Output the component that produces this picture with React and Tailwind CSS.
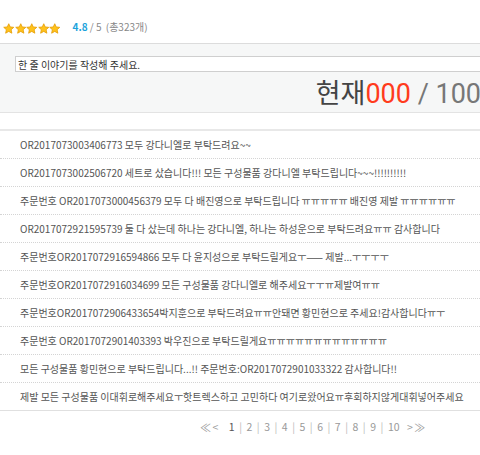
import React from "react";

const rows = [
  "OR2017073003406773 모두 강다니엘로 부탁드려요~~",
  "OR2017073002506720 세트로 샀습니다!!! 모든 구성물품 강다니엘 부탁드립니다~~~!!!!!!!!!!",
  "주문번호 OR2017073000456379 모두 다 배진영으로 부탁드립니다 ㅠㅠㅠㅠㅠ 배진영 제발 ㅠㅠㅠㅠㅠㅠ",
  "OR2017072921595739 둘 다 샀는데 하나는 강다니엘, 하나는 하성운으로 부탁드려요ㅠㅠ 감사합니다",
  "주문번호OR2017072916594866 모두 다 윤지성으로 부탁드릴게요ㅜ—— 제발...ㅜㅜㅜㅜ",
  "주문번호OR2017072916034699 모든 구성물품 강다니엘로 해주세요ㅜㅜㅠ제발여ㅠㅠ",
  "주문번호OR2017072906433654박지훈으로 부탁드려요ㅠㅠ안돼면 황민현으로 주세요!감사합니다ㅠㅜ",
  "주문번호 OR2017072901403393 박우진으로 부탁드릴게요ㅠㅠㅠㅠㅠㅠㅠㅠㅠㅠㅠㅠㅠ",
  "모든 구성물품 황민현으로 부탁드립니다...!! 주문번호:OR2017072901033322 감사합니다!!",
  "제발 모든 구성물품 이대휘로해주세요ㅜ핫트렉스하고 고민하다 여기로왔어요ㅠ후회하지않게대휘넣어주세요",
];

function Star() {
  return (
    <svg width="11.5" height="11.5" viewBox="0 0 24 24">
      <polygon
        points="12,1.5 15.1,8.2 22.5,9 17,14 18.5,21.3 12,17.6 5.5,21.3 7,14 1.5,9 8.9,8.2"
        fill="#ffc21c"
        stroke="#e39a00"
        strokeWidth="1.6"
        strokeLinejoin="round"
      />
    </svg>
  );
}

const ko = { fontFamily: '"Noto Sans CJK KR", "Noto Sans", sans-serif' };

export default function App() {
  const pages = ["1", "2", "3", "4", "5", "6", "7", "8", "9", "10"];
  return (
    <div className="w-[480px] h-[455px] overflow-hidden bg-white" style={ko}>
      <div className="h-[44px] flex items-end pb-[9px] pl-[3px] border-b border-[#dcdcdc] shadow-[0_1px_2px_rgba(0,0,0,0.06)]">
        <div className="flex items-center gap-[0px]">
          <Star /><Star /><Star /><Star /><Star />
        </div>
        <div className="ml-[12px] text-[10px] leading-[14px] text-[#888]">
          <span className="text-[#1ba3dc] font-bold">4.8</span>
          <span> / 5 </span>
          <span className="ml-[2px]">(총323개)</span>
        </div>
      </div>
      <div className="w-[505px] bg-[#f6f7f7] border-b border-[#e3e3e3] pl-[15px] pr-[24px] pt-[12px] h-[69px]">
        <div className="mr-[-9px] h-[16px] bg-white border border-[#cfcfcf] flex items-center pl-[2px] text-[10px] text-[#333]">
          한 줄 이야기를 작성해 주세요.
        </div>
        <div
          className="text-right text-[27px] leading-[30px] mt-[7px] whitespace-nowrap"
          style={{ fontFamily: 'Roboto, "Noto Sans CJK KR", sans-serif' }}
        >
          <span className="text-[#444]">현재</span>
          <span className="text-[#ff3b1d]">000</span>
          <span className="text-[#777]"> / 100</span>
        </div>
      </div>
      <div className="mt-[16px] border-t-2 border-[#e8e8e8]">
        {rows.map((r, i) => (
          <div
            key={i}
            className={
              "h-[28px] flex items-center pl-[20px] text-[10px] text-[#555] whitespace-nowrap " +
              (i === rows.length - 1
                ? "border-b border-[#e0e0e0]"
                : "border-b border-dotted border-[#d4d4d4]")
            }
          >
            {r}
          </div>
        ))}
      </div>
      <div className="flex items-center pl-[200px] pt-[8px] text-[10.5px] text-[#999] gap-[4.5px]">
        <span className="text-[11px]">≪</span>
        <span className="ml-[-3px]">&lt;</span>
        <span className="ml-[6px] text-[#555]">1</span>
        {pages.slice(1).map((p) => (
          <React.Fragment key={p}>
            <span className="text-[#bbb]">|</span>
            <span>{p}</span>
          </React.Fragment>
        ))}
        <span className="ml-[3px]">&gt;</span>
        <span className="ml-[-3px] text-[11px]">≫</span>
      </div>
    </div>
  );
}
